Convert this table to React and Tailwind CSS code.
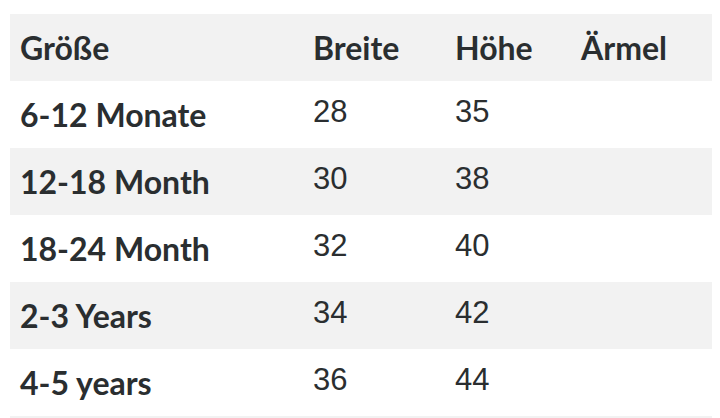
export default function App() {
  const rows = [
    ["6-12 Monate", "28", "35"],
    ["12-18 Month", "30", "38"],
    ["18-24 Month", "32", "40"],
    ["2-3 Years", "34", "42"],
    ["4-5 years", "36", "44"],
  ];
  const bold = "font-['Lato',sans-serif] font-bold text-[32px] leading-[32px] pt-[18px] pl-[10px] whitespace-nowrap";
  const num = "font-['Liberation_Sans',Arial,sans-serif] text-[31px] leading-[31px] pt-[15px] pl-[10px]";
  return (
    <div className="w-[720px] h-[418px] bg-white overflow-hidden pt-[14px] pl-[10px] text-[#2a2e30]">
      <div className="w-[702px]">
        <div className="grid grid-cols-[293px_142px_126px_141px] h-[67px] bg-[#f2f2f2]">
          <div className={bold}>Größe</div>
          <div className={bold}>Breite</div>
          <div className={bold}>Höhe</div>
          <div className={bold}>Ärmel</div>
        </div>
        {rows.map((r, i) => (
          <div
            key={i}
            className={
              "grid grid-cols-[293px_142px_126px_141px] h-[67px] " +
              (i % 2 === 1 ? "bg-[#f2f2f2]" : "bg-white")
            }
          >
            <div className={bold}>{r[0]}</div>
            <div className={num}>{r[1]}</div>
            <div className={num}>{r[2]}</div>
            <div></div>
          </div>
        ))}
        <div className="h-[4px] bg-[#f2f2f2]"></div>
      </div>
    </div>
  );
}
